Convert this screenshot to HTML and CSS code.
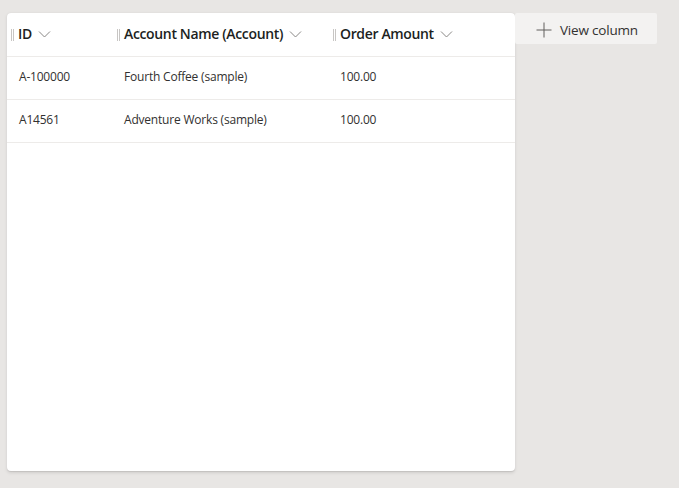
FILE: index.html
```html
<!DOCTYPE html>
<html>
<head>
<meta charset="utf-8">
<link rel="stylesheet" href="styles.css">
</head>
<body>
<div class="page">
  <div class="card">
    <div class="row head">
      <div class="cell c1"><span class="grip"></span><span class="title">ID</span><svg class="chev" width="13" height="8" viewBox="0 0 13 8"><path d="M1 1.5 L6.5 7 L12 1.5" fill="none" stroke="#8a8886" stroke-width="1"/></svg></div>
      <div class="cell c2"><span class="grip"></span><span class="title">Account Name (Account)</span><svg class="chev" width="13" height="8" viewBox="0 0 13 8"><path d="M1 1.5 L6.5 7 L12 1.5" fill="none" stroke="#8a8886" stroke-width="1"/></svg></div>
      <div class="cell c3"><span class="grip"></span><span class="title">Order Amount</span><svg class="chev" width="13" height="8" viewBox="0 0 13 8"><path d="M1 1.5 L6.5 7 L12 1.5" fill="none" stroke="#8a8886" stroke-width="1"/></svg></div>
    </div>
    <div class="row data">
      <div class="cell c1">A-100000</div>
      <div class="cell c2">Fourth Coffee (sample)</div>
      <div class="cell c3">100.00</div>
    </div>
    <div class="row data">
      <div class="cell c1">A14561</div>
      <div class="cell c2">Adventure Works (sample)</div>
      <div class="cell c3">100.00</div>
    </div>
  </div>
  <div class="add">
    <svg width="16" height="16" viewBox="0 0 16 16"><path d="M8 0.5 V15.5 M0.5 8 H15.5" stroke="#605e5c" stroke-width="1" fill="none"/></svg>
    <span>View column</span>
  </div>
</div>
</body>
</html>
```
FILE: styles.css
```css
html, body {
  margin: 0;
  padding: 0;
  background: #e8e6e4;
  font-family: "Open Sans", "Noto Sans", sans-serif;
  color: #323130;
}
.page {
  display: flex;
  align-items: flex-start;
  padding: 13px 0 0 7px;
  height: 488px;
  box-sizing: border-box;
}
.card {
  width: 508px;
  height: 458px;
  background: #fff;
  border-radius: 4px;
  box-shadow: 0 1.6px 3.6px rgba(0,0,0,0.10), 0 0.3px 0.9px rgba(0,0,0,0.08);
}
.row {
  display: flex;
  height: 43px;
  border-bottom: 1px solid #edebe9;
  box-sizing: border-box;
}
.head { height: 44px; padding-bottom: 2px; }
.data { padding-bottom: 3px; }
.cell {
  display: flex;
  align-items: center;
  box-sizing: border-box;
  white-space: nowrap;
}
.c1 { width: 105px; padding-left: 12px; }
.c2 { width: 216px; padding-left: 12px; }
.c3 { flex: 1; padding-left: 12px; }
.head .c1 { padding-left: 4px; }
.head .c2, .head .c3 { padding-left: 5px; }
.grip {
  width: 3px;
  height: 12px;
  border-left: 1px solid #c8c6c4;
  border-right: 1px solid #c8c6c4;
  box-sizing: border-box;
  margin-right: 4px;
  margin-top: 2px;
}
.title {
  font-size: 14px;
  font-weight: 600;
  letter-spacing: -0.35px;
  color: #201f1e;
}
.chev { margin-left: 6px; margin-top: 1px; }
.data .cell {
  font-size: 12px;
  letter-spacing: -0.2px;
  color: #323130;
}
.add {
  display: flex;
  align-items: center;
  gap: 8px;
  width: 142px;
  height: 31px;
  padding-left: 21px;
  padding-top: 3px;
  box-sizing: border-box;
  background: #f3f2f1;
  border-radius: 2px;
  font-size: 13.5px;
  font-weight: 400;
  letter-spacing: -0.2px;
  color: #323130;
}
```
